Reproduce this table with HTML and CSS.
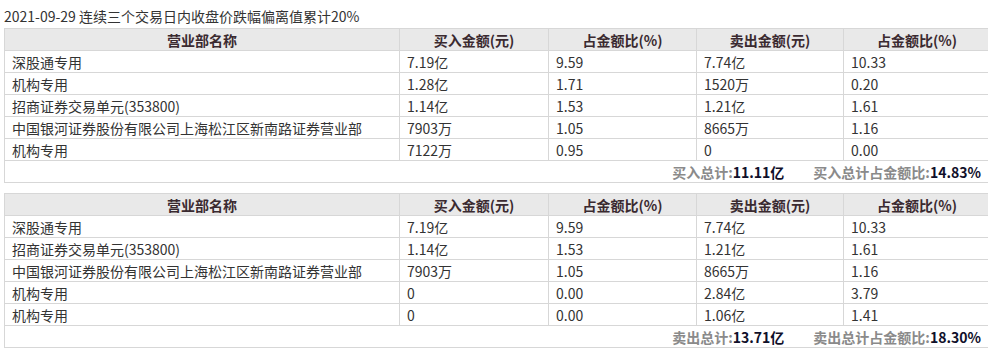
FILE: index.html
```html
<!DOCTYPE html>
<html lang="zh-CN">
<head>
<meta charset="utf-8">
<title>龙虎榜</title>
<link rel="stylesheet" href="styles.css">
</head>
<body>
<div class="page">
  <div class="title">2021-09-29 连续三个交易日内收盘价跌幅偏离值累计20%</div>
  <table class="lhb">
    <colgroup><col class="c1"><col class="c2"><col class="c3"><col class="c4"><col class="c5"></colgroup>
    <thead>
      <tr><th>营业部名称</th><th>买入金额(元)</th><th>占金额比(%)</th><th>卖出金额(元)</th><th>占金额比(%)</th></tr>
    </thead>
    <tbody>
      <tr><td>深股通专用</td><td>7.19亿</td><td>9.59</td><td>7.74亿</td><td>10.33</td></tr>
      <tr><td>机构专用</td><td>1.28亿</td><td>1.71</td><td>1520万</td><td>0.20</td></tr>
      <tr><td>招商证券交易单元(353800)</td><td>1.14亿</td><td>1.53</td><td>1.21亿</td><td>1.61</td></tr>
      <tr><td>中国银河证券股份有限公司上海松江区新南路证券营业部</td><td>7903万</td><td>1.05</td><td>8665万</td><td>1.16</td></tr>
      <tr><td>机构专用</td><td>7122万</td><td>0.95</td><td>0</td><td>0.00</td></tr>
      <tr class="total"><td colspan="5"><span class="lbl">买入总计:</span><span class="val">11.11亿</span><span class="lbl gap">买入总计占金额比:</span><span class="val">14.83%</span></td></tr>
    </tbody>
  </table>
  <table class="lhb second">
    <colgroup><col class="c1"><col class="c2"><col class="c3"><col class="c4"><col class="c5"></colgroup>
    <thead>
      <tr><th>营业部名称</th><th>买入金额(元)</th><th>占金额比(%)</th><th>卖出金额(元)</th><th>占金额比(%)</th></tr>
    </thead>
    <tbody>
      <tr><td>深股通专用</td><td>7.19亿</td><td>9.59</td><td>7.74亿</td><td>10.33</td></tr>
      <tr><td>招商证券交易单元(353800)</td><td>1.14亿</td><td>1.53</td><td>1.21亿</td><td>1.61</td></tr>
      <tr><td>中国银河证券股份有限公司上海松江区新南路证券营业部</td><td>7903万</td><td>1.05</td><td>8665万</td><td>1.16</td></tr>
      <tr><td>机构专用</td><td>0</td><td>0.00</td><td>2.84亿</td><td>3.79</td></tr>
      <tr><td>机构专用</td><td>0</td><td>0.00</td><td>1.06亿</td><td>1.41</td></tr>
      <tr class="total"><td colspan="5"><span class="lbl">卖出总计:</span><span class="val">13.71亿</span><span class="lbl gap">卖出总计占金额比:</span><span class="val">18.30%</span></td></tr>
    </tbody>
  </table>
</div>
</body>
</html>
```
FILE: styles.css
```css
html, body {
  margin: 0;
  padding: 0;
  background: #fff;
  overflow: hidden;
}
body {
  font-family: "Noto Sans CJK SC", "Noto Sans", sans-serif;
  font-size: 14px;
  color: #333;
}
.page {
  padding: 0 0 0 4px;
  width: 990px;
}
.title {
  height: 28px;
  box-sizing: border-box;
  padding-top: 5px;
  line-height: 22px;
  color: #333;
}
.lhb {
  border-collapse: collapse;
  table-layout: fixed;
  width: 986px;
}
.lhb.second {
  margin-top: 10px;
}
.c1 { width: 395px; }
.c2 { width: 149px; }
.c3 { width: 148px; }
.c4 { width: 147px; }
.c5 { width: 147px; }
.lhb th,
.lhb td {
  border: 1px solid #d7d7d7;
  height: 21px;
  padding: 0 0 0 7px;
  line-height: 20px;
  white-space: nowrap;
  text-align: left;
  font-weight: normal;
}
.lhb th {
  background: #e9e9e9;
  text-align: center;
  padding: 0;
  font-weight: bold;
  color: #3a2a30;
}
.lhb .total td {
  text-align: right;
  padding-right: 9px;
  font-weight: bold;
}
.lbl {
  color: #8a8a8a;
}
.val {
  color: #10102a;
}
.gap {
  margin-left: 29px;
}
```
